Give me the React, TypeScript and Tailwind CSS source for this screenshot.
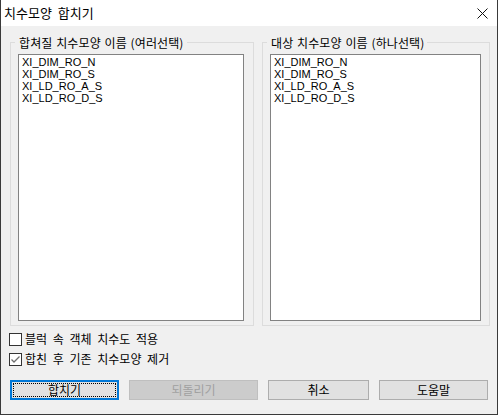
import React from "react";

const KR = "font-['Noto_Sans_CJK_KR','Noto_Sans',sans-serif]";

const ITEMS = ["XI_DIM_RO_N", "XI_DIM_RO_S", "XI_LD_RO_A_S", "XI_LD_RO_D_S"];

function ListBox({ width }: { width: string }) {
  return (
    <div
      className={`${width} mt-[3px] h-[267px] border border-[#828282] bg-white pl-[3px] pt-[1px] font-['Liberation_Sans',Arial,sans-serif] text-[11px] leading-[12px] text-black`}
    >
      {ITEMS.map((it) => (
        <div key={it}>{it}</div>
      ))}
    </div>
  );
}

function Group({ title, width, listWidth, pr }: { title: string; width: string; listWidth: string; pr: string }) {
  return (
    <fieldset className={`${width} border border-[#dcdcdc] pl-[7px] ${pr} pb-[4px]`}>
      <legend className={`ml-[-3px] pl-[4px] pr-[3px] ${KR} text-[12px] leading-[17px] tracking-[0.1px] [word-spacing:1px] text-black`}>
        {title}
      </legend>
      <ListBox width={listWidth} />
    </fieldset>
  );
}

function Check({ checked, label }: { checked?: boolean; label: string }) {
  return (
    <div className="flex h-[20px] items-center gap-[3px] pl-[8px]">
      <span className="flex h-[13px] w-[13px] items-center justify-center border border-[#333333] bg-white">
        {checked && (
          <svg width="11" height="11" viewBox="0 0 11 11">
            <path d="M1.5 5.5 L4 8 L9.5 2.5" fill="none" stroke="#6f6f6f" strokeWidth="1.3" />
          </svg>
        )}
      </span>
      <span className={`${KR} text-[12px] leading-[16px] [word-spacing:3px] text-black`}>{label}</span>
    </div>
  );
}

export default function App() {
  return (
    <div className="flex h-[415px] w-[498px] flex-col border-x border-b border-[#3a3a3a] bg-[#f0f0f0]">
      <div className="flex h-[26px] shrink-0 items-center justify-between bg-white pl-[3px] pr-[9px]">
        <span className={`${KR} text-[13px] leading-[18px] [word-spacing:3px] text-black`}>치수모양 합치기</span>
        <svg width="11" height="11" viewBox="0 0 11 11" className="mt-[1px]">
          <path d="M0.5 0.5 L10.5 10.5 M10.5 0.5 L0.5 10.5" stroke="#111" strokeWidth="1" />
        </svg>
      </div>

      <div className="mt-[8px] flex gap-[8px] pl-[9px]">
        <Group title="합쳐질 치수모양 이름 (여러선택)" width="w-[244px]" listWidth="w-[226px]" pr="pr-[9px]" />
        <Group title="대상 치수모양 이름 (하나선택)" width="w-[228px]" listWidth="w-[211px]" pr="pr-[8px]" />
      </div>

      <div className="mt-[3px] flex flex-col">
        <Check label="블럭 속 객체 치수도 적용" />
        <Check checked label="합친 후 기존 치수모양 제거" />
      </div>

      <div className={`mt-[11px] flex gap-[10px] pl-[9px] ${KR} text-[12px] leading-[16px]`}>
        <button className="h-[20px] w-[109px] border-2 border-[#0078d7] bg-[#e1e1e1] p-[1px] text-black">
          <span className="flex h-full w-full items-center justify-center border border-dotted border-black">
            합치기
          </span>
        </button>
        <button disabled className="h-[20px] w-[129px] border border-[#bfbfbf] bg-[#cccccc] text-[#a0a0a0]">
          되돌리기
        </button>
        <button className="h-[20px] w-[101px] border border-[#adadad] bg-[#e1e1e1] text-black">취소</button>
        <button className="h-[20px] w-[109px] border border-[#adadad] bg-[#e1e1e1] text-black">도움말</button>
      </div>
    </div>
  );
}
